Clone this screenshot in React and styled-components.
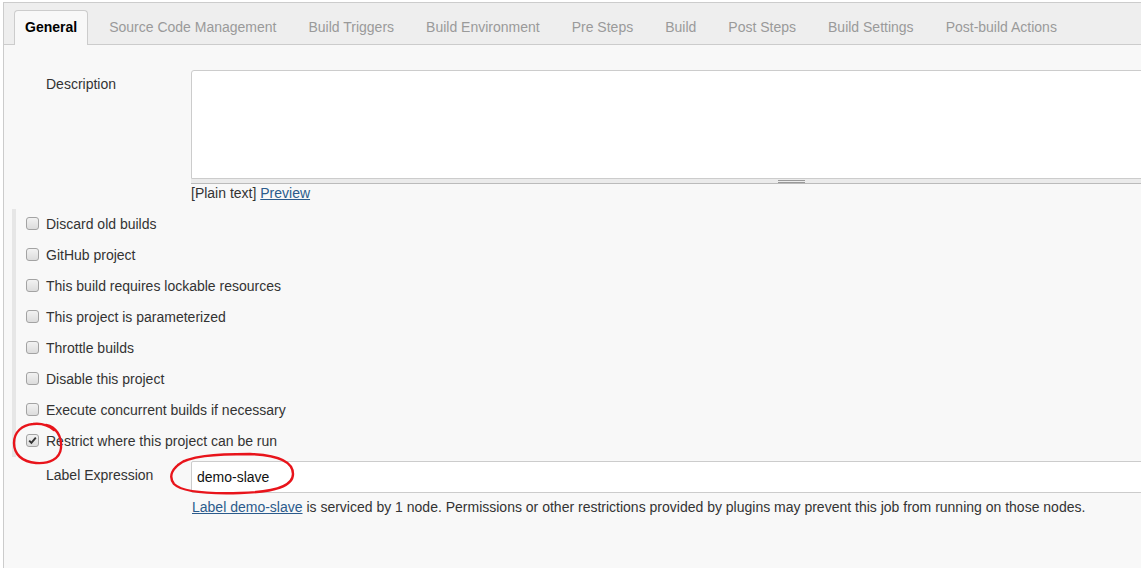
import React from 'react';
import styled, { createGlobalStyle } from 'styled-components';

const Global = createGlobalStyle`
  html, body { margin: 0; padding: 0; background: #fff; overflow: hidden; }
  body {
    font-family: "Liberation Sans", Arial, sans-serif;
    font-size: 14px;
    color: #333;
  }
`;

const Page = styled.div`
  position: relative;
  width: 1400px;
  height: 568px;
  padding: 2px 0 0 3px;
  box-sizing: border-box;
`;

const Panel = styled.div`
  height: 566px;
  box-sizing: border-box;
  border-left: 1px solid #ccc;
  border-top: 1px solid #ccc;
  background: #f8f8f8;
`;

const TabBar = styled.div`
  display: flex;
  align-items: flex-end;
  height: 41px;
  padding-left: 10px;
  background: #eeeeee;
  border-bottom: 1px solid #cccccc;
`;

const Tab = styled.div`
  display: flex;
  align-items: center;
  box-sizing: border-box;
  height: 35px;
  margin-bottom: -1px;
  padding: ${p => (p.$active ? '0 10px 2px' : '0 15px 2px')};
  margin-right: ${p => (p.$active ? '5px' : '0')};
  border: 1px solid ${p => (p.$active ? '#cccccc' : 'transparent')};
  border-bottom: none;
  border-radius: 4px 4px 0 0;
  background: ${p => (p.$active ? '#f8f8f8' : 'transparent')};
  color: ${p => (p.$active ? '#000' : '#9a9a9a')};
  font-weight: ${p => (p.$active ? 'bold' : 'normal')};
  white-space: nowrap;
  line-height: 17px;
`;

const Form = styled.div`
  padding-top: 25px;
`;

const FieldRow = styled.div`
  display: grid;
  grid-template-columns: 187px 1201px;
  margin-top: ${p => p.$mt || 0}px;
`;

const Label = styled.div`
  padding-left: 42px;
  padding-top: 6px;
  line-height: 17px;
  color: #333;
`;

const Field = styled.div`
  display: flex;
  flex-direction: column;
`;

const TextArea = styled.textarea`
  display: block;
  box-sizing: border-box;
  width: 100%;
  height: 109px;
  margin: 0;
  border: 1px solid #cccccc;
  border-radius: 3px 3px 0 0;
  background: #fff;
  resize: none;
  font-family: inherit;
  font-size: 14px;
  outline: none;
`;

const Handle = styled.div`
  display: flex;
  justify-content: center;
  align-items: center;
  height: 4px;
  background: #ebebeb;
  border-bottom: 1px solid #bbbbbb;
`;

const Grip = styled.div`
  width: 27px;
  height: 1px;
  border-top: 1px solid #999;
  border-bottom: 1px solid #999;
`;

const Hint = styled.div`
  line-height: 17px;
  color: #333;
  margin-top: ${p => p.$mt || 0}px;
  padding-left: ${p => p.$pl || 0}px;
  white-space: nowrap;
`;

const Link = styled.a`
  color: #2b5b8c;
  text-decoration: underline;
  cursor: pointer;
`;

const OptionBlock = styled.div`
  margin-top: 7px;
  margin-left: 8px;
  border-left: 4px solid #e6e6e6;
`;

const OptionRow = styled.label`
  display: flex;
  align-items: center;
  height: 31px;
  padding-left: 10px;
  line-height: 17px;
  color: #333;
`;

const Box = styled.span`
  display: inline-flex;
  align-items: center;
  justify-content: center;
  box-sizing: border-box;
  width: 13px;
  height: 13px;
  margin-right: 7px;
  margin-top: -2px;
  border: 1px solid #a3a3a3;
  border-radius: 3px;
  background: linear-gradient(#f2f2f2, #dcdcdc);
`;

const Input = styled.input`
  display: block;
  box-sizing: border-box;
  width: 100%;
  height: 32px;
  margin: 0;
  padding: 0 5px;
  border: 1px solid #cccccc;
  border-radius: 2px;
  background: #fff;
  font-family: inherit;
  font-size: 14px;
  color: #111;
  outline: none;
`;

const Annotations = styled.svg`
  position: absolute;
  left: 0;
  top: 0;
  pointer-events: none;
`;

const tabs = [
  'General',
  'Source Code Management',
  'Build Triggers',
  'Build Environment',
  'Pre Steps',
  'Build',
  'Post Steps',
  'Build Settings',
  'Post-build Actions',
];

const options = [
  ['Discard old builds', false],
  ['GitHub project', false],
  ['This build requires lockable resources', false],
  ['This project is parameterized', false],
  ['Throttle builds', false],
  ['Disable this project', false],
  ['Execute concurrent builds if necessary', false],
  ['Restrict where this project can be run', true],
];

function Check({ checked }) {
  return (
    <Box>
      {checked && (
        <svg width="9" height="9" viewBox="0 0 9 9">
          <path d="M1.2 4.6 L3.4 6.9 L7.8 1.6" fill="none" stroke="#333" strokeWidth="1.9" />
        </svg>
      )}
    </Box>
  );
}

export default function App() {
  return (
    <>
      <Global />
      <Page>
        <Panel>
          <TabBar>
            {tabs.map((t, i) => (
              <Tab key={t} $active={i === 0}>{t}</Tab>
            ))}
          </TabBar>
          <Form>
            <FieldRow>
              <Label>Description</Label>
              <Field>
                <TextArea />
                <Handle><Grip /></Handle>
                <Hint $mt={1}>[Plain text] <Link>Preview</Link></Hint>
              </Field>
            </FieldRow>
            <OptionBlock>
              {options.map(([text, checked]) => (
                <OptionRow key={text}>
                  <Check checked={checked} />
                  {text}
                </OptionRow>
              ))}
            </OptionBlock>
            <FieldRow $mt={4}>
              <Label>Label Expression</Label>
              <Field>
                <Input defaultValue="demo-slave" />
                <Hint $mt={6} $pl={1}>
                  <Link>Label demo-slave</Link> is serviced by 1 node. Permissions or other restrictions provided by plugins may prevent this job from running on those nodes.
                </Hint>
              </Field>
            </FieldRow>
          </Form>
        </Panel>
        <Annotations width="1141" height="568" viewBox="0 0 1141 568">
          <path
            d="M 46 425 C 56 427, 62 436, 61 448 C 60 459, 49 464, 36 463 C 22 462, 14 454, 14 443 C 14 432, 22 425, 33 424 C 41 423, 48 425, 54 430"
            fill="none" stroke="#e8141b" strokeWidth="2.4" strokeLinecap="round"
          />
          <path
            d="M 178 465 C 188 456, 215 454, 250 454 C 278 455, 293 462, 293 474 C 293 486, 276 492, 240 493 C 205 494, 181 491, 174 484 C 168 476, 172 468, 184 461"
            fill="none" stroke="#e8141b" strokeWidth="2.4" strokeLinecap="round"
          />
        </Annotations>
      </Page>
    </>
  );
}
